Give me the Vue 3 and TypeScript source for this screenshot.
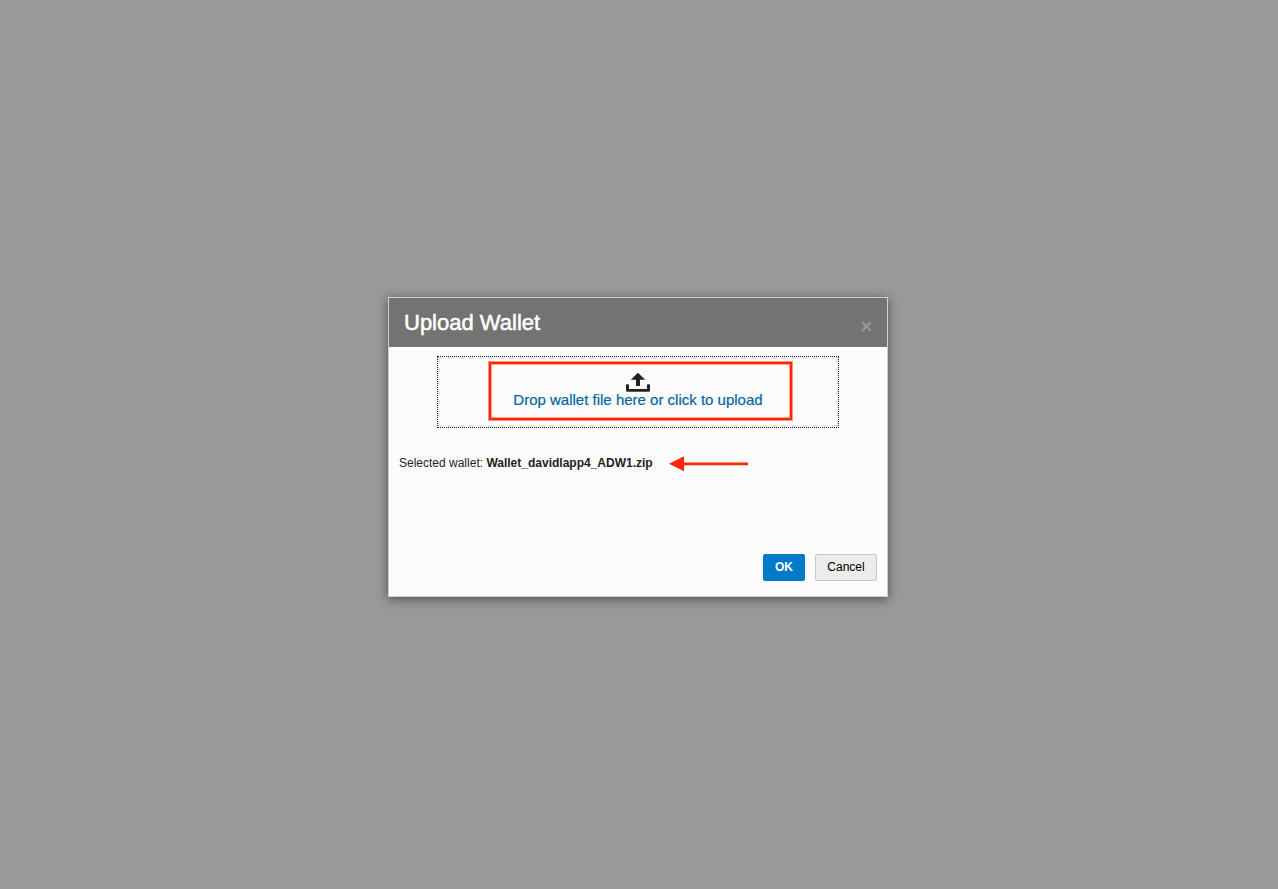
<script setup lang="ts">
import { ref } from 'vue'

const fileName = ref('Wallet_davidlapp4_ADW1.zip')
const open = ref(true)

function close(): void {
  open.value = false
}

function onPick(event: Event): void {
  const file = (event.target as HTMLInputElement).files?.[0]
  if (file) fileName.value = file.name
}
</script>

<template>
  <main class="backdrop">
    <section v-if="open" class="dialog" role="dialog" aria-labelledby="dialog-title">
      <header class="head">
        <h1 id="dialog-title">Upload Wallet</h1>
        <button class="close" type="button" aria-label="Close" @click="close">
          <svg width="11" height="11" viewBox="0 0 11 11"><path d="M1.2 1.2L9.8 9.8M9.8 1.2L1.2 9.8" /></svg>
        </button>
      </header>
      <div class="body">
        <label class="drop" for="wallet-file">
          <input id="wallet-file" class="picker" type="file" accept=".zip" @change="onPick" />
          <span class="guide"></span>
          <svg class="upload" width="24" height="20" viewBox="0 0 24 20">
            <path d="M12 0.7L19.2 7.8H14V14H10V7.8H4.8Z" />
            <path d="M0 13Q0 12.2 0.8 12.2H2.2Q3 12.2 3 13V17H21V13Q21 12.2 21.8 12.2H23.2Q24 12.2 24 13V18.4Q24 19.8 22.6 19.8H1.4Q0 19.8 0 18.4Z" />
          </svg>
          <span>Drop wallet file here or click to upload</span>
          <span class="highlight"></span>
        </label>
        <p class="selected">
          <span>Selected wallet: <strong>{{ fileName }}</strong></span>
          <svg class="arrow" width="80" height="18" viewBox="0 0 80 18">
            <path d="M0 9.7L15 2.2V17.2Z" /><path d="M14 8.5H79V11.2H14Z" />
          </svg>
        </p>
      </div>
      <footer class="actions">
        <button class="btn primary" type="button" @click="close">OK</button>
        <button class="btn" type="button" @click="close">Cancel</button>
      </footer>
    </section>
  </main>
</template>

<style>
body {
  background: #999;
}
</style>

<style scoped>
.backdrop {
  box-sizing: border-box;
  min-height: 100vh;
  padding: 5px 16px 0 14px;
  display: flex;
  align-items: center;
  justify-content: center;
  background: #999;
  font-family: "Liberation Sans", Arial, Helvetica, sans-serif;
  font-size: 12px;
  color: #222;
}
.dialog {
  box-sizing: border-box;
  width: 100%;
  max-width: 500px;
  min-height: 300px;
  display: flex;
  flex-direction: column;
  background: #fcfcfc;
  border: 1px solid #d0d0d0;
  box-shadow: 0 2px 10px rgba(0, 0, 0, 0.5);
}
.head {
  display: flex;
  align-items: center;
  justify-content: space-between;
  height: 49px;
  padding: 0 15px;
  background: #737373;
}
h1 {
  margin: 0;
  font-size: 22px;
  line-height: 28px;
  font-weight: 400;
  color: #fff;
  -webkit-text-stroke: 0.5px #fff;
}
.close {
  display: flex;
  margin-top: 7px;
  padding: 0;
  border: 0;
  background: none;
}
.close path {
  stroke: #929599;
  stroke-width: 2.4;
}
.body {
  flex: 1;
  padding: 9px 10px;
}
.drop {
  position: relative;
  box-sizing: border-box;
  width: 84%;
  height: 72px;
  margin: 0 auto;
  padding-top: 15px;
  display: flex;
  flex-direction: column;
  align-items: center;
  border: 1px dotted #222;
  font-size: 15px;
  line-height: 15px;
  color: #0065a3;
  -webkit-text-stroke: 0.2px #0065a3;
  cursor: pointer;
}
.picker {
  position: absolute;
  width: 1px;
  height: 1px;
  opacity: 0;
}
.guide {
  position: absolute;
  inset: 0;
  border: 2px dashed #e4e4e4;
}
.upload {
  position: relative;
  fill: #222;
}
.highlight {
  position: absolute;
  top: 5px;
  left: 51px;
  right: 46px;
  bottom: 7px;
  border: 2px solid #ff2600;
  box-shadow: 0 0 0 1px rgba(255, 38, 0, 0.5), inset 0 0 0 1px rgba(255, 38, 0, 0.4);
}
.selected {
  display: flex;
  align-items: center;
  gap: 16px;
  margin: 26px 0 0;
  line-height: 16px;
}
.arrow {
  fill: #ff2600;
}
.actions {
  display: flex;
  justify-content: flex-end;
  gap: 10px;
  padding: 0 10px 15px;
}
.btn {
  box-sizing: border-box;
  min-width: 42px;
  height: 27px;
  padding: 0 11px 2px;
  border: 1px solid #c8c8c8;
  border-radius: 2px;
  background: #ececec;
  color: #000;
  font: inherit;
}
.btn:last-child {
  min-width: 62px;
}
.primary {
  border-color: #007ac9;
  background: #007ac9;
  color: #fff;
  font-weight: 700;
}
</style>
